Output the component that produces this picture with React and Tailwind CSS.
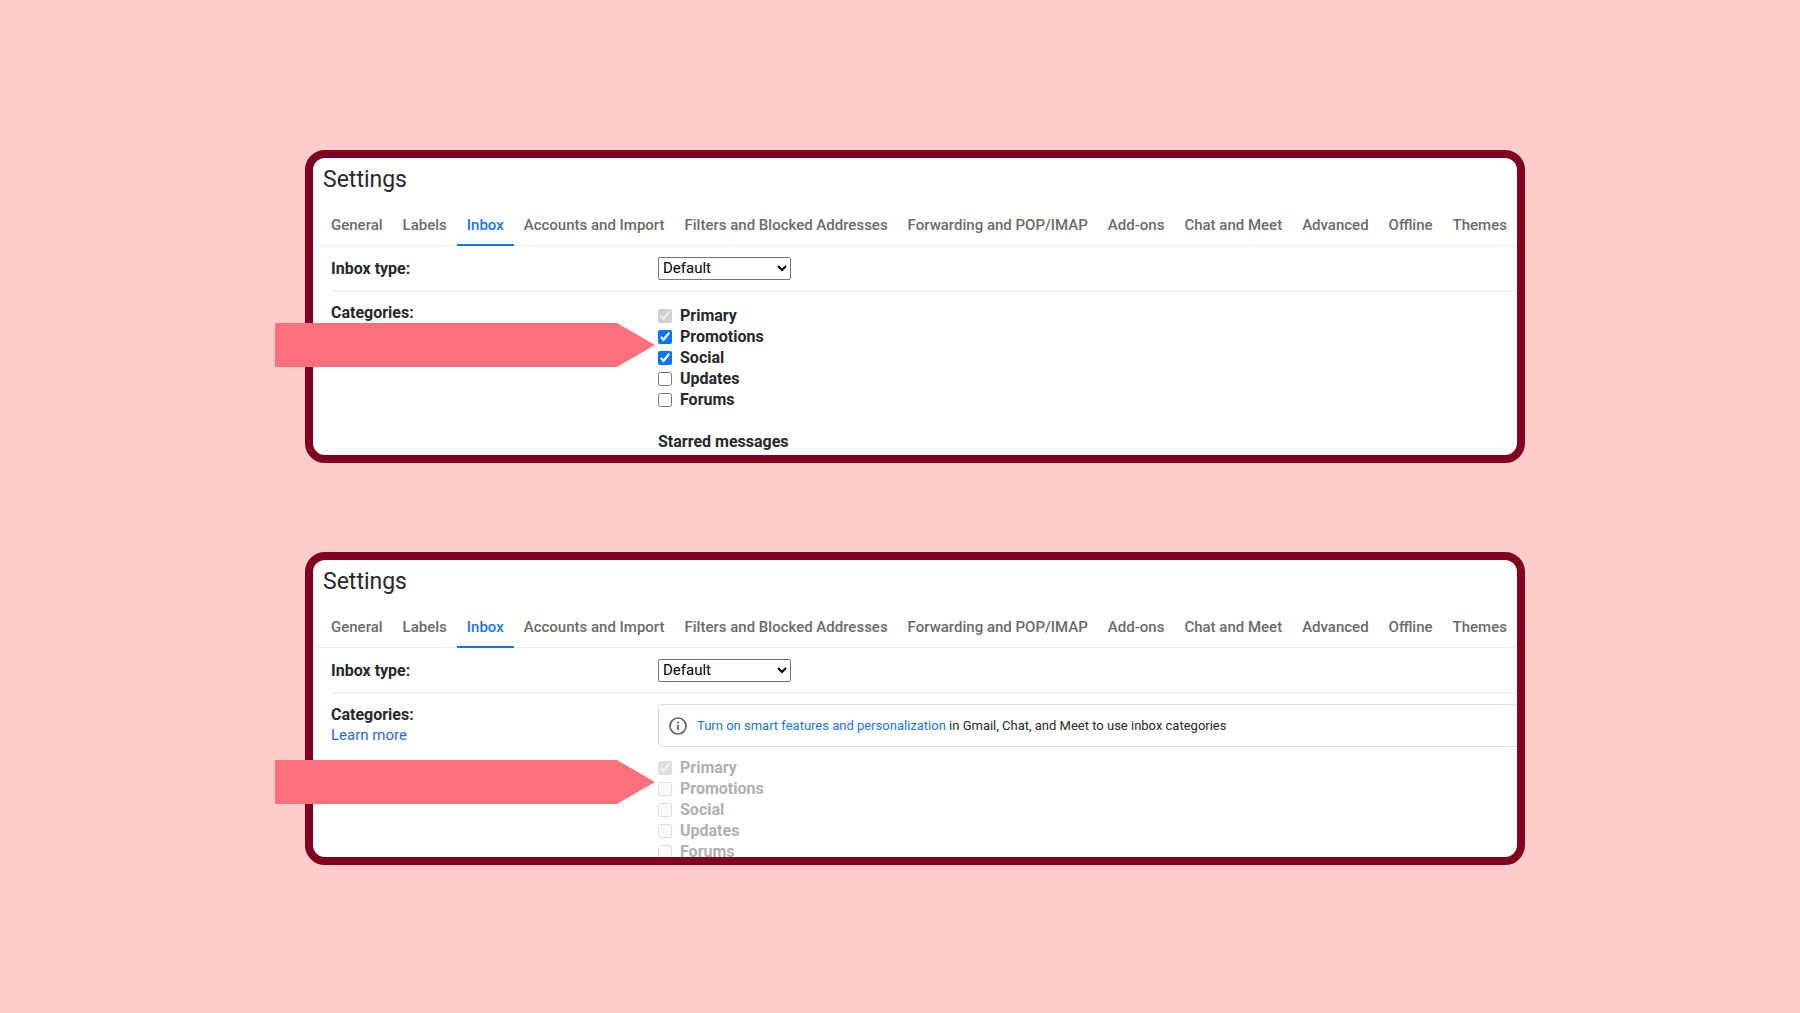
const TABS = [
  'General',
  'Labels',
  'Inbox',
  'Accounts and Import',
  'Filters and Blocked Addresses',
  'Forwarding and POP/IMAP',
  'Add-ons',
  'Chat and Meet',
  'Advanced',
  'Offline',
  'Themes',
];

function InfoIcon() {
  return (
    <svg viewBox="0 0 18 18" className="size-[18px] shrink-0" fill="none" aria-hidden="true">
      <circle cx="9" cy="9" r="8" stroke="#5f6368" strokeWidth="1.7" />
      <path d="M9 8v5" stroke="#5f6368" strokeWidth="1.8" />
      <path d="M9 4.7v1.8" stroke="#5f6368" strokeWidth="1.8" />
    </svg>
  );
}

function Arrow() {
  return (
    <svg viewBox="0 0 380 44" className="block h-11 w-[380px]" aria-hidden="true">
      <path d="M0 0H342L380 22L342 44H0Z" fill="#ff707c" />
    </svg>
  );
}

function Tabs() {
  return (
    <nav className="flex h-[42px] border-b border-[#ececec] pl-2" aria-label="Settings sections">
      {TABS.map((tab) => (
        <a
          key={tab}
          href={'#' + tab}
          className={
            tab === 'Inbox'
              ? 'h-[42px] shrink-0 border-b-2 border-[#1a73e8] px-[10px] pt-[11px] font-medium whitespace-nowrap text-[#1a73e8]'
              : 'h-[42px] shrink-0 px-[10px] pt-[11px] font-medium whitespace-nowrap text-[#6b6b6b]'
          }
        >
          {tab}
        </a>
      ))}
    </nav>
  );
}

function Categories({ id, items }) {
  return (
    <div className="flex flex-col">
      {items.map(({ name, checked, disabled, faded }) => (
        <div key={name} className="flex h-[21px] items-center gap-2">
          <input
            id={id + name}
            type="checkbox"
            defaultChecked={checked}
            disabled={disabled}
            className={faded ? 'm-0 size-[14px] opacity-70' : 'm-0 size-[14px]'}
          />
          <label
            htmlFor={id + name}
            className={
              faded
                ? 'text-[16px] leading-[21px] font-bold text-[#b0b0b0]'
                : 'text-[16px] leading-[21px] font-bold'
            }
          >
            {name}
          </label>
        </div>
      ))}
    </div>
  );
}

function Panel({ id, children, arrowClass }) {
  return (
    <section className="relative">
      <div className="max-h-[313px] overflow-hidden rounded-[20px] border-8 border-[#800020] bg-white">
        <h1 className="pt-1.5 pb-2 pl-[10px] text-[23px] leading-8">Settings</h1>
        <Tabs />
        <div className="ml-[18px] flex h-[46px] items-center border-b-2 border-[#f0f0f0]">
          <label
            htmlFor={id + 'type'}
            className="w-[327px] shrink-0 text-[16px] leading-[21px] font-bold"
          >
            Inbox type:
          </label>
          <select
            id={id + 'type'}
            className="h-[23px] w-[133px] rounded-[2px] border border-[#767676] bg-white text-black"
          >
            <option>Default</option>
          </select>
        </div>
        <div className="ml-[18px] flex pt-2.5">{children}</div>
      </div>
      <div className={arrowClass}>
        <Arrow />
      </div>
    </section>
  );
}

export default function App() {
  return (
    <main className="flex min-h-screen flex-col gap-[89px] bg-[#ffcccc] pt-[150px] pr-[275px] pb-[148px] pl-[305px] font-[Roboto,sans-serif] text-[15px] leading-[21px] text-[#26282b]">
      <Panel id="a" arrowClass="absolute top-[173px] -left-[30px]">
        <h2 className="w-[327px] shrink-0 text-[16px] leading-[21px] font-bold">Categories:</h2>
        <div className="py-[3px]">
          <Categories
            id="a"
            items={[
              { name: 'Primary', checked: true, disabled: true },
              { name: 'Promotions', checked: true },
              { name: 'Social', checked: true },
              { name: 'Updates' },
              { name: 'Forums' },
            ]}
          />
          <h2 className="pt-[21px] text-[16px] leading-[21px] font-bold">Starred messages</h2>
        </div>
      </Panel>
      <Panel id="b" arrowClass="absolute top-[208px] -left-[30px]">
        <div className="w-[327px] shrink-0">
          <h2 className="text-[16px] leading-[21px] font-bold">Categories:</h2>
          <a href="#learn" className="text-[#2a66d9]">
            Learn more
          </a>
        </div>
        <div className="flex-1">
          <div className="mb-2.5 flex h-[43px] items-center gap-2.5 rounded-l-[4px] border border-r-0 border-[#dadce0] pl-[10px]">
            <InfoIcon />
            <p className="text-[13px] whitespace-nowrap">
              <a href="#smart" className="text-[#1a73e8]">
                Turn on smart features and personalization
              </a>{' '}
              in Gmail, Chat, and Meet to use inbox categories
            </p>
          </div>
          <Categories
            id="b"
            items={[
              { name: 'Primary', checked: true, disabled: true, faded: true },
              { name: 'Promotions', disabled: true, faded: true },
              { name: 'Social', disabled: true, faded: true },
              { name: 'Updates', disabled: true, faded: true },
              { name: 'Forums', disabled: true, faded: true },
            ]}
          />
        </div>
      </Panel>
    </main>
  );
}
